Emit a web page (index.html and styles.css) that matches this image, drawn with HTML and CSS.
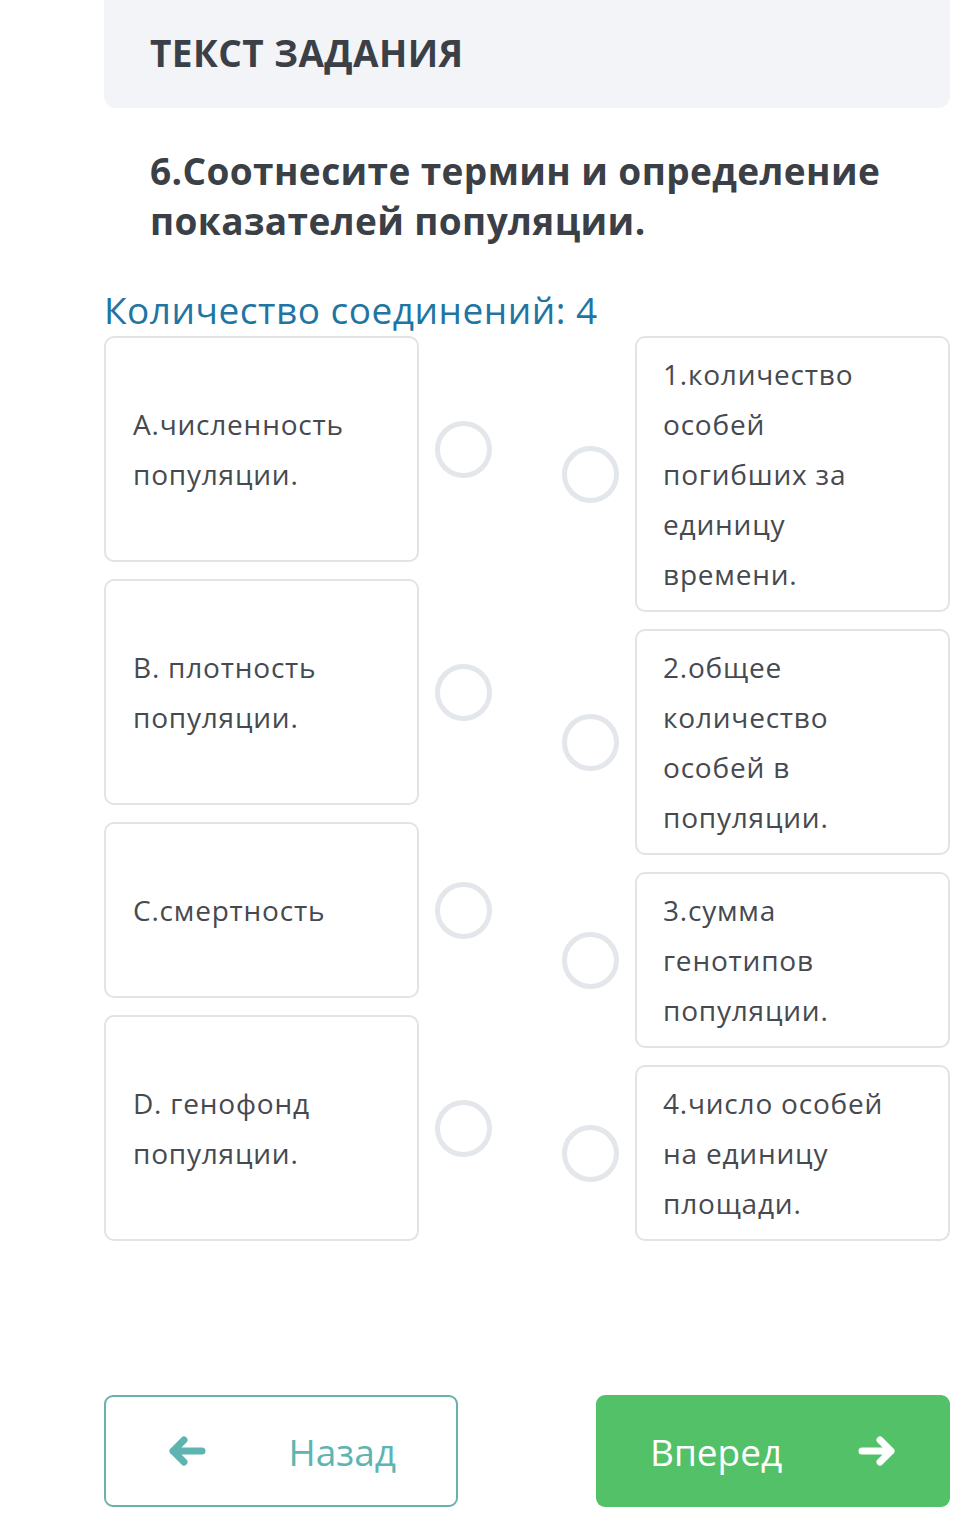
FILE: index.html
```
<!DOCTYPE html>
<html lang="ru">
<head>
<meta charset="utf-8">
<title>Текст задания</title>
<link rel="stylesheet" href="styles.css">
</head>
<body>
<div class="page">
  <div class="task-head">ТЕКСТ ЗАДАНИЯ</div>
  <h1 class="question">6.Соотнесите термин и определение показателей популяции.</h1>
  <div class="count">Количество соединений: 4</div>
  <div class="match">
    <div class="col col-left">
      <div class="row"><div class="card card-left">А.численность популяции.</div><span class="dot"></span></div>
      <div class="row"><div class="card card-left">В. плотность популяции.</div><span class="dot"></span></div>
      <div class="row"><div class="card card-left">С.смертность</div><span class="dot"></span></div>
      <div class="row"><div class="card card-left">D. генофонд популяции.</div><span class="dot"></span></div>
    </div>
    <div class="col col-right">
      <div class="row"><span class="dot"></span><div class="card card-right">1.количество особей погибших за единицу времени.</div></div>
      <div class="row"><span class="dot"></span><div class="card card-right">2.общее количество особей в популяции.</div></div>
      <div class="row"><span class="dot"></span><div class="card card-right">3.сумма генотипов популяции.</div></div>
      <div class="row"><span class="dot"></span><div class="card card-right">4.число особей на единицу площади.</div></div>
    </div>
  </div>
  <div class="nav">
    <button class="btn btn-back">
      <svg class="arrow" width="38" height="30" viewBox="0 0 38 30"><path d="M34 15H5M16 4L5 15l11 11" fill="none" stroke="currentColor" stroke-width="7" stroke-linecap="round" stroke-linejoin="round"/></svg>
      <span>Назад</span>
    </button>
    <button class="btn btn-next">
      <span>Вперед</span>
      <svg class="arrow" width="38" height="30" viewBox="0 0 38 30"><path d="M4 15h29M22 4l11 11-11 11" fill="none" stroke="currentColor" stroke-width="7" stroke-linecap="round" stroke-linejoin="round"/></svg>
    </button>
  </div>
</div>
</body>
</html>
```
FILE: styles.css
```
html, body {
  margin: 0;
  padding: 0;
  background: #ffffff;
}
body {
  font-family: "Open Sans", "Noto Sans", sans-serif;
}
.page {
  padding: 0 28px 0 104px;
}
.task-head {
  height: 108px;
  box-sizing: border-box;
  background: #f3f4f7;
  border-radius: 0 0 12px 12px;
  padding-left: 46px;
  padding-bottom: 3px;
  display: flex;
  align-items: center;
  font-size: 37px;
  font-weight: 700;
  color: #3b4047;
  letter-spacing: 0.4px;
}
.question {
  margin: 38px 0 0 46px;
  font-size: 37px;
  line-height: 50px;
  font-weight: 700;
  color: #3b4047;
  letter-spacing: 0.4px;
}
.count {
  margin-top: 42px;
  font-size: 37px;
  line-height: 44px;
  color: #1f76a3;
  letter-spacing: 0.5px;
}
.match {
  margin-top: 4px;
  display: flex;
  gap: 70px;
}
.col {
  width: 388px;
  display: flex;
  flex-direction: column;
  gap: 17px;
}
.row {
  display: flex;
  align-items: center;
  gap: 16px;
}
.card {
  width: 315px;
  box-sizing: border-box;
  border: 2px solid #e1e3e6;
  border-radius: 10px;
  font-size: 28px;
  line-height: 50px;
  color: #464a50;
  letter-spacing: 0.8px;
}
.card-left {
  padding: 61px 20px 61px 27px;
}
.card-right {
  padding: 11px 38px 11px 26px;
}
.dot {
  width: 57px;
  height: 57px;
  flex: none;
  box-sizing: border-box;
  border: 5px solid #e3e6ea;
  border-radius: 50%;
}
.nav {
  margin-top: 154px;
  display: flex;
  justify-content: space-between;
}
.btn {
  width: 354px;
  height: 112px;
  box-sizing: border-box;
  border-radius: 9px;
  display: flex;
  align-items: center;
  justify-content: space-between;
  font-family: "Open Sans", "Noto Sans", sans-serif;
  font-size: 37px;
  cursor: pointer;
}
.btn-back {
  background: #ffffff;
  border: 2px solid #69b1ad;
  color: #5db4b0;
  padding: 0 60px 0 62px;
}
.btn-next {
  background: #52c168;
  border: none;
  color: #ffffff;
  padding: 0 54px 0 54px;
}
.arrow {
  display: block;
}
```
